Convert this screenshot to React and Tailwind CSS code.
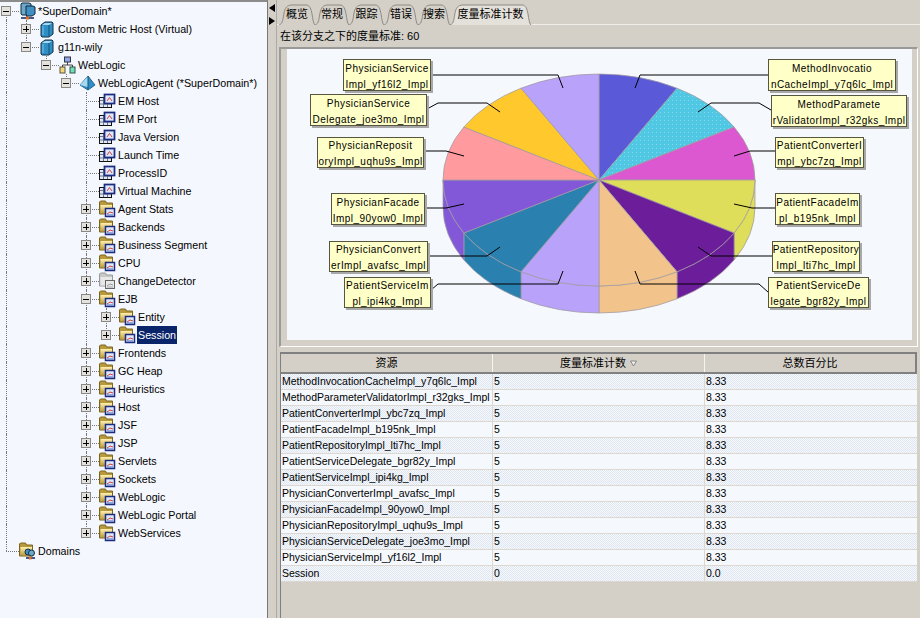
import React from "react";

const sans = "font-['Liberation_Sans','Noto_Sans_CJK_SC',sans-serif]";
const checker = "bg-[repeating-conic-gradient(#dfe6f0_0_25%,#f5f8fd_0_50%)] bg-[length:2px_2px]";

function DomainIcon() {
    return (
        <svg width="17" height="18" viewBox="0 0 17 18">
            <path d="M3 1h7l2 1v9l-3 2H3l-1-1V2z" fill="#6ea8c8" stroke="#102840" />
            <path d="M7 4h7l2 1v7l-3 2H8l-1-1z" fill="#3f8fc0" stroke="#102840" />
            <path d="M8 14v2M2 16h13" stroke="#0a246a" strokeWidth="1.5" />
            <rect x="7" y="14.5" width="3" height="3" fill="#e07020" />
        </svg>
    );
}

function HostIcon() {
    return (
        <svg width="17" height="18" viewBox="0 0 17 18">
            <path d="M2 5l4-3h7l1 1v11l-4 3H3l-1-1z" fill="#2f8fc4" stroke="#12304a" />
            <path d="M3 5l3-2h7l-3 2z" fill="#a8d8ee" />
            <path d="M10 5v11" stroke="#12507a" />
            <path d="M4 6v9" stroke="#7cc4e8" />
        </svg>
    );
}

function GroupIcon() {
    return (
        <svg width="17" height="18" viewBox="0 0 17 18">
            <path d="M8.5 6v3M3.5 11V9h10v2" stroke="#444" fill="none" />
            <rect x="5.5" y="1" width="6" height="5" fill="#8ea8e8" stroke="#334" />
            <rect x="1" y="11" width="5" height="6" fill="#f2d878" stroke="#554" />
            <rect x="11" y="11" width="5" height="6" fill="#70e0b8" stroke="#354" />
        </svg>
    );
}

function AgentIcon() {
    return (
        <svg width="17" height="18" viewBox="0 0 17 18">
            <path d="M9 2L1 11l8 5 7-5z" fill="#2f8fc4" stroke="#2a6a96" />
            <path d="M9 2L1 11l8 2z" fill="#a8d8ee" />
            <path d="M9 2v14" stroke="#14507c" />
        </svg>
    );
}

function Gauge({ x, y, gray }) {
    return (
        <g transform={`translate(${x} ${y})`}>
            <rect x="0.5" y="0.5" width="9" height="8" fill={gray ? "#e8e8e8" : "#dfe8f8"} stroke={gray ? "#666" : "#1c2c80"} strokeWidth={gray ? 1 : 1.5} />
            <path d="M2 6l3-2 3 1" stroke={gray ? "#999" : "#d04040"} fill="none" />
            <path d="M2 7h6" stroke={gray ? "#aaa" : "#5070c0"} />
        </g>
    );
}

function MetricIcon() {
    return (
        <svg width="17" height="18" viewBox="0 0 17 18">
            <rect x="0.5" y="5.5" width="12" height="10" fill="#e4e8f0" stroke="#111" />
            <path d="M1 8.5h11M1 12h11M4.5 6v9M8.5 6v9" stroke="#6a7890" />
            <rect x="5.5" y="2.5" width="10" height="9" fill="#dfe8f8" stroke="#1c2c80" strokeWidth="1.75" />
            <path d="M8 9l2.5-3.5L13 9" stroke="#d04040" fill="none" />
        </svg>
    );
}

function FolderIcon({ gray, network }) {
    const back = gray ? "#c8c8c8" : "#b89a3c";
    return (
        <svg width="17" height="18" viewBox="0 0 17 18">
            <defs>
                <linearGradient id="folderBody" x1="0" y1="0" x2="0" y2="1">
                    <stop offset="0" stopColor="#fff0b0" />
                    <stop offset="1" stopColor="#b89a3c" />
                </linearGradient>
            </defs>
            <path d="M0.5 3V2l1-1h5l1 2h6v11H0.5z" fill={back} stroke={gray ? "#999" : "#7a6420"} />
            <path d="M1.5 5h11.5v8.5H1.5z" fill={gray ? "#e8e8e8" : "url(#folderBody)"} />
            {network ? (
                <g>
                    <circle cx="9" cy="10" r="3" fill="#3f8fc0" stroke="#12304a" />
                    <circle cx="12.5" cy="11" r="3" fill="#6ea8c8" stroke="#12304a" />
                    <path d="M7 16h9" stroke="#0a246a" strokeWidth="1.5" />
                    <rect x="10" y="14.5" width="2.5" height="3" fill="#e07020" />
                </g>
            ) : (
                <Gauge x={6} y={8} gray={gray} />
            )}
        </svg>
    );
}

const icons = {
    domain: <DomainIcon />,
    host: <HostIcon />,
    group: <GroupIcon />,
    agent: <AgentIcon />,
    metric: <MetricIcon />,
    folder: <FolderIcon />,
    gray: <FolderIcon gray />,
    domains: <FolderIcon network />,
};

const metricNames = ["EM Host", "EM Port", "Java Version", "Launch Time", "ProcessID", "Virtual Machine"];
const folders = ["Agent Stats", "Backends", "Business Segment", "CPU"];
const folders2 = ["Frontends", "GC Heap", "Heuristics", "Host", "JSF", "JSP", "Servlets", "Sockets", "WebLogic", "WebLogic Portal", "WebServices"];

const tree = [
    {
        name: "*SuperDomain*", icon: "domain", open: true, root: true,
        children: [
            { name: "Custom Metric Host (Virtual)", icon: "host", closed: true },
            {
                name: "g11n-wily", icon: "host", open: true,
                children: [{
                    name: "WebLogic", icon: "group", open: true,
                    children: [{
                        name: "WebLogicAgent (*SuperDomain*)", icon: "agent", open: true,
                        children: [
                            ...metricNames.map((name) => ({ name, icon: "metric" })),
                            ...folders.map((name) => ({ name, icon: "folder", closed: true })),
                            { name: "ChangeDetector", icon: "gray", closed: true },
                            {
                                name: "EJB", icon: "folder", open: true,
                                children: [
                                    { name: "Entity", icon: "folder", closed: true },
                                    { name: "Session", icon: "folder", closed: true, selected: true },
                                ],
                            },
                            ...folders2.map((name) => ({ name, icon: "folder", closed: true })),
                        ],
                    }],
                }],
            },
        ],
    },
    { name: "Domains", icon: "domains" },
];

function Expander({ open }) {
    return (
        <span className="absolute left-[1px] top-[4px] w-[10px] h-[10px] border border-[#888] bg-[#e4e2da] flex items-center justify-center">
            <span className="relative block w-[6px] h-[6px]">
                <span className="absolute left-0 top-[2.5px] w-[6px] h-px bg-black" />
                {!open && <span className="absolute left-[2.5px] top-0 w-px h-[6px] bg-black" />}
            </span>
        </span>
    );
}

function TreeNode({ node, guides, last }) {
    return (
        <>
            <div className="flex h-[18px] items-center">
                {guides.map((on, i) => (
                    <span key={i} className="relative w-5 h-[18px] shrink-0">
                        {on && <span className="absolute left-[6px] top-0 h-[18px] border-l border-dotted border-[#777]" />}
                    </span>
                ))}
                <span className="relative w-[19px] h-[18px] shrink-0">
                    <span className={`absolute left-[6px] border-l border-dotted border-[#777] ${node.root ? "top-[9px] h-[9px]" : last ? "top-0 h-[9px]" : "top-0 h-[18px]"}`} />
                    <span className="absolute left-[6px] top-[9px] w-[13px] border-t border-dotted border-[#777]" />
                    {(node.open || node.closed) && <Expander open={node.open} />}
                </span>
                <span className="w-[17px] h-[18px] shrink-0">{icons[node.icon]}</span>
                <span className={`ml-[1px] px-[1px] h-[18px] leading-[18px] whitespace-nowrap text-[10.7px] ${node.selected ? "bg-[#0a246a] text-white" : "text-black"}`}>
                    {node.name}
                </span>
            </div>
            {node.children && node.children.map((child, i) => (
                <TreeNode
                    key={child.name}
                    node={child}
                    guides={[...guides, !last]}
                    last={i === node.children.length - 1}
                />
            ))}
        </>
    );
}

const tabs = [
    { label: "概览", w: "w-[36px]", width: 36 },
    { label: "常规", w: "w-[34px]", width: 34 },
    { label: "跟踪", w: "w-[35px]", width: 35 },
    { label: "错误", w: "w-[34px]", width: 34 },
    { label: "搜索", w: "w-[32px]", width: 32 },
    { label: "度量标准计数", w: "w-[81px]", width: 81, active: true },
];

function Tab({ tab }) {
    const w = tab.width;
    return (
        <div className={`relative h-[21px] ${tab.w} shrink-0 flex items-center justify-center text-[11px] text-black`}>
            <svg className="absolute left-0 top-0" width={w + 1} height="21" viewBox={`0 0 ${w + 1} 21`}>
                <path
                    d={`M0 21C4 20 4 14 5 9C6 4 8 1 13 1H${w - 9}C${w - 5} 1 ${w - 4} 5 ${w - 3} 10C${w - 2} 15 ${w - 2} 19 ${w} 21`}
                    fill={tab.active ? "#e4e1da" : "#d4d0c8"}
                    stroke="#8c8a84"
                />
            </svg>
            <span className="relative">{tab.label}</span>
        </div>
    );
}

const cx = 599;
const cy = 180;
const rx = 156;
const ry = 106;
const depth = 27;
const sliceColors = ["#5a5ad8", "#50c8e4", "#dc58d0", "#dede5a", "#6c1e9a", "#f2c48c", "#b8a2fa", "#2a80ae", "#8258d8", "#ff9a9e", "#ffc82c", "#b8a2fa"];

function pt(deg) {
    const a = (deg * Math.PI) / 180;
    return [cx + rx * Math.sin(a), cy - ry * Math.cos(a)];
}

const leaders = [
    "M635 88L640 75H768",
    "M698 112L711 103H759L771 110",
    "M734 156L750 151H775",
    "M734 204L752 208H775",
    "M698 247L711 256H772",
    "M635 271L640 284H759L768 292",
    "M563 88L558 75H430",
    "M500 112L487 103H438L427 109",
    "M464 156L446 151H424",
    "M464 204L446 208H425",
    "M500 247L487 256H428",
    "M563 271L558 284H438L431 290",
];

function Pie() {
    return (
        <svg className="absolute left-0 top-0" width="625" height="291" viewBox="287 49 625 291">
            <defs>
                <pattern id="dots" width="4" height="4" patternUnits="userSpaceOnUse">
                    <rect width="1" height="1" fill="#ffffff" fillOpacity="0.3" />
                </pattern>
            </defs>
            {sliceColors.map((color, i) => {
                const a1 = i * 30;
                const a2 = a1 + 30;
                if (a1 < 90 || a2 > 270) return null;
                const [x1, y1] = pt(a1);
                const [x2, y2] = pt(a2);
                return (
                    <path
                        key={i}
                        d={`M${x1} ${y1}A${rx} ${ry} 0 0 1 ${x2} ${y2}V${y2 + depth}A${rx} ${ry} 0 0 0 ${x1} ${y1 + depth}Z`}
                        fill={color}
                        stroke="#a09aa0"
                        strokeWidth="0.75"
                    />
                );
            })}
            {sliceColors.map((color, i) => {
                const [x1, y1] = pt(i * 30);
                const [x2, y2] = pt((i + 1) * 30);
                const d = `M${cx} ${cy}L${x1} ${y1}A${rx} ${ry} 0 0 1 ${x2} ${y2}Z`;
                return (
                    <g key={i}>
                        <path d={d} fill={color} stroke="#a09aa0" strokeWidth="0.75" />
                        {i === 1 && <path d={d} fill="url(#dots)" />}
                    </g>
                );
            })}
            {leaders.map((d) => (
                <path key={d} d={d} fill="none" stroke="#000" strokeWidth="1" />
            ))}
        </svg>
    );
}

const labels = [
    { a: "PhysicianService", b: "Impl_yf16l2_Impl", c: "left-[56px] top-[10px] w-[88px] h-[32px]" },
    { a: "PhysicianService", b: "Delegate_joe3mo_Impl", c: "left-[23px] top-[45px] w-[117px] h-[32px]" },
    { a: "PhysicianReposit", b: "oryImpl_uqhu9s_Impl", c: "left-[30px] top-[88px] w-[107px] h-[31px]" },
    { a: "PhysicianFacade", b: "Impl_90yow0_Impl", c: "left-[44px] top-[144px] w-[94px] h-[32px]" },
    { a: "PhysicianConvert", b: "erImpl_avafsc_Impl", c: "left-[42px] top-[192px] w-[99px] h-[31px]" },
    { a: "PatientServiceIm", b: "pl_ipi4kg_Impl", c: "left-[57px] top-[228px] w-[87px] h-[31px]" },
    { a: "MethodInvocatio", b: "nCacheImpl_y7q6lc_Impl", c: "left-[481px] top-[10px] w-[128px] h-[32px]" },
    { a: "MethodParamete", b: "rValidatorImpl_r32gks_Impl", c: "left-[484px] top-[46px] w-[136px] h-[32px]" },
    { a: "PatientConverterI", b: "mpl_ybc7zq_Impl", c: "left-[488px] top-[88px] w-[89px] h-[31px]" },
    { a: "PatientFacadeIm", b: "pl_b195nk_Impl", c: "left-[488px] top-[144px] w-[85px] h-[32px]" },
    { a: "PatientRepository", b: "Impl_lti7hc_Impl", c: "left-[485px] top-[192px] w-[88px] h-[31px]" },
    { a: "PatientServiceDe", b: "legate_bgr82y_Impl", c: "left-[481px] top-[228px] w-[101px] h-[31px]" },
];

const rows = [
    ["MethodInvocationCacheImpl_y7q6lc_Impl", "5", "8.33"],
    ["MethodParameterValidatorImpl_r32gks_Impl", "5", "8.33"],
    ["PatientConverterImpl_ybc7zq_Impl", "5", "8.33"],
    ["PatientFacadeImpl_b195nk_Impl", "5", "8.33"],
    ["PatientRepositoryImpl_lti7hc_Impl", "5", "8.33"],
    ["PatientServiceDelegate_bgr82y_Impl", "5", "8.33"],
    ["PatientServiceImpl_ipi4kg_Impl", "5", "8.33"],
    ["PhysicianConverterImpl_avafsc_Impl", "5", "8.33"],
    ["PhysicianFacadeImpl_90yow0_Impl", "5", "8.33"],
    ["PhysicianRepositoryImpl_uqhu9s_Impl", "5", "8.33"],
    ["PhysicianServiceDelegate_joe3mo_Impl", "5", "8.33"],
    ["PhysicianServiceImpl_yf16l2_Impl", "5", "8.33"],
    ["Session", "0", "0.0"],
];

export default function App() {
    return (
        <div className={`w-[920px] h-[618px] overflow-hidden flex bg-[#d4d0c8] ${sans}`}>
            <div className="w-[268px] h-full shrink-0 bg-[#f4f7fd] border-t-2 border-t-[#8c8c8c] border-r border-r-[#777] overflow-hidden">
                {tree.map((node, i) => (
                    <TreeNode key={node.name} node={node} guides={[]} last={i === tree.length - 1} />
                ))}
            </div>

            <div className="w-[9px] h-full shrink-0 flex flex-col items-center pt-1 gap-[5px] border-r border-r-[#aaa]">
                <span className="w-0 h-0 border-y-[4px] border-y-transparent border-r-[6px] border-r-black" />
                <span className="w-0 h-0 border-y-[4px] border-y-transparent border-l-[6px] border-l-black" />
            </div>

            <div className="flex-1 min-w-0 h-full flex flex-col">
                <div className="h-[25px] pt-[4px] pl-[2px] flex border-b border-b-[#f0eee8] shrink-0">
                    {tabs.map((tab) => (
                        <Tab key={tab.label} tab={tab} />
                    ))}
                </div>

                <div className="h-[22px] pl-[3px] flex items-center text-[11px] text-black shrink-0">
                    在该分支之下的度量标准: 60
                </div>

                <div className="ml-[2px] mr-[2px] h-[300px] shrink-0 border-t-2 border-l-2 border-t-[#9a9a96] border-l-[#9a9a96] border-b border-r border-b-white border-r-white pl-[6px] pr-[5px]">
                    <div className="relative w-[625px] h-[291px] bg-[#f5f8fd] overflow-hidden">
                        <Pie />
                        {labels.map((l) => (
                            <div
                                key={l.b}
                                className={`absolute ${l.c} bg-[#ffffc8] border border-[#555540] shadow-[2px_2px_0_#a8a8a8] flex flex-col items-center justify-center pt-[3px] text-[10px] leading-[16px] tracking-[0.45px] text-black whitespace-nowrap`}
                            >
                                <span>{l.a}</span>
                                <span>{l.b}</span>
                            </div>
                        ))}
                    </div>
                </div>

                <div className="mt-[5px] ml-[3px] mr-[3px] flex-1 flex flex-col border-t-2 border-l border-t-[#808080] border-l-[#808080]">
                    <div className="flex h-[20px] shrink-0 border-b-2 border-b-[#808080] text-[11px] text-black bg-[#d4d0c8]">
                        <div className="w-[212px] shrink-0 flex items-center justify-center border-r border-r-[#f4f4f0]">资源</div>
                        <div className="w-[212px] shrink-0 flex items-center justify-center gap-1 border-r border-r-[#f4f4f0]">
                            度量标准计数
                            <svg width="7" height="7" viewBox="0 0 7 7">
                                <path d="M0.5 1h6L3.5 6z" fill="#eeeeee" stroke="#888" />
                            </svg>
                        </div>
                        <div className="flex-1 flex items-center justify-center border-r-2 border-r-[#808080]">总数百分比</div>
                    </div>
                    {rows.map((row, i) => (
                        <div
                            key={row[0]}
                            className={`flex h-[16px] shrink-0 border-b border-b-[#dcd8d0] text-[10.5px] leading-[15px] text-black ${i % 2 === 0 ? checker : "bg-[#f5f8fd]"}`}
                        >
                            <div className="w-[212px] shrink-0 pl-[1px] whitespace-nowrap border-r border-r-[#dcd8d0]">{row[0]}</div>
                            <div className="w-[212px] shrink-0 pl-[1px] border-r border-r-[#dcd8d0]">{row[1]}</div>
                            <div className="flex-1 pl-[1px]">{row[2]}</div>
                        </div>
                    ))}
                    <div className="flex-1 bg-[#d4d0c8]" />
                </div>
            </div>
        </div>
    );
}
